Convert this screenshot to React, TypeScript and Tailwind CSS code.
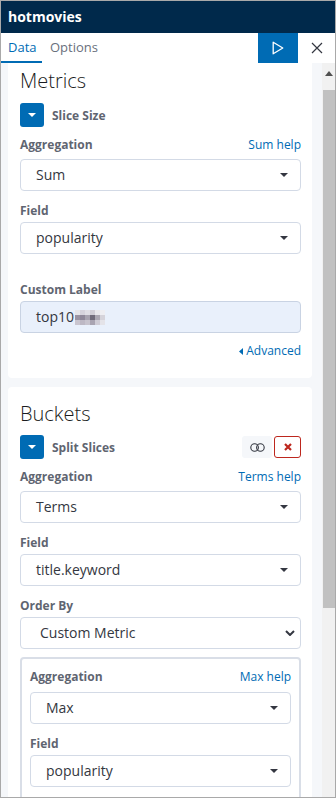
import React from "react";

const Caret = () => (
  <svg width="8" height="4" viewBox="0 0 8 4" className="shrink-0">
    <path d="M0 0 L8 0 L4 4 Z" fill="#343741" />
  </svg>
);

const Label = ({ children, className = "" }: { children: React.ReactNode; className?: string }) => (
  <div className={`text-[12px] leading-4 font-bold text-[#5f6571] ${className}`}>{children}</div>
);

const LabelRow = ({ label, link, className = "" }: { label: string; link?: string; className?: string }) => (
  <div className={`flex justify-between items-start ${className}`}>
    <Label>{label}</Label>
    {link && <div className="text-[12px] leading-4 text-[#006bb4]">{link}</div>}
  </div>
);

const Select = ({ value, className = "" }: { value: string; className?: string }) => (
  <div
    className={`h-8 border border-[#d3dae6] rounded-[4px] bg-white flex items-center justify-between pl-[15px] pr-[12px] ${className}`}
  >
    <span className="text-[14px] leading-5 text-[#343741]">{value}</span>
    <Caret />
  </div>
);

const NativeSelect = ({ value, className = "" }: { value: string; className?: string }) => (
  <div
    className={`h-8 border border-[#d3dae6] rounded-[4px] bg-white flex items-center justify-between pl-[19px] pr-[5px] ${className}`}
  >
    <span className="text-[14px] leading-5 text-[#343741]">{value}</span>
    <svg width="10" height="6" viewBox="0 0 10 6">
      <path d="M1 1 L5 5 L9 1" fill="none" stroke="#343741" strokeWidth="2" />
    </svg>
  </div>
);

const BlueToggle = () => (
  <div className="w-6 h-6 rounded-[3px] bg-[#006bb4] flex items-center justify-center shrink-0">
    <svg width="8" height="4" viewBox="0 0 8 4">
      <path d="M0 0 L8 0 L4 4 Z" fill="#ffffff" />
    </svg>
  </div>
);

const blur = [
  ["#e6e5ea", "#d6d3dc", "#e0dee5", "#d0cdd6", "#e8e7ec", "#eeeef2"],
  ["#9a93a3", "#8f8899", "#a8a3b0", "#6f6a7a", "#aaa6b2", "#d5d3da"],
  ["#c9c5cf", "#bdb8c4", "#c7c3cd", "#a9a4b1", "#cfccd5", "#e4e3e8"],
];

export default function App() {
  return (
    <div className="w-[336px] h-[798px] border border-[#a9a9a9] flex flex-col overflow-hidden bg-white font-['Open_Sans',sans-serif]">
      {/* Header */}
      <div className="h-8 shrink-0 bg-[#00294b] flex items-center px-[7px]">
        <span className="text-white font-bold text-[14px] leading-5">hotmovies</span>
      </div>

      {/* Tabs */}
      <div className="h-[30px] shrink-0 bg-white flex items-stretch">
        <div className="w-[41px] border-b-2 border-[#006bb4] flex items-center pl-[7px] text-[13px] leading-4 text-[#006bb4]">
          Data
        </div>
        <div className="ml-[8px] flex items-center pb-[2px] text-[13px] leading-4 text-[#69707d]">Options</div>
        <div className="flex-1" />
        <div className="w-10 bg-[#006bb4] flex items-center justify-center">
          <svg width="12" height="14" viewBox="0 0 12 14">
            <path d="M1.2 1.2 L10.8 7 L1.2 12.8 Z" fill="none" stroke="#ffffff" strokeWidth="1.3" strokeLinejoin="round" />
          </svg>
        </div>
        <div className="w-[37px] flex items-center justify-center">
          <svg width="12" height="12" viewBox="0 0 12 12">
            <path d="M1 1 L11 11 M11 1 L1 11" stroke="#343741" strokeWidth="1.2" />
          </svg>
        </div>
      </div>

      {/* Content */}
      <div className="flex-1 min-h-0 flex bg-[#f5f7fa]">
        <div className="w-[321px] pl-[7px] pr-[10px] flex flex-col overflow-hidden">
          {/* Metrics card */}
          <div className="bg-white rounded-b-[4px] pl-3 pr-[11px] pt-[6px] pb-[19px] shrink-0">
            <div className="text-[20px] leading-6 font-light text-[#1a1c21]">Metrics</div>
            <div className="mt-[10px] flex items-center gap-2">
              <BlueToggle />
              <Label className="pt-[1px]">Slice Size</Label>
            </div>
            <LabelRow className="mt-[10px]" label="Aggregation" link="Sum help" />
            <Select className="mt-[6px]" value="Sum" />
            <Label className="mt-3">Field</Label>
            <Select className="mt-[3px]" value="popularity" />
            <Label className="mt-[28px]">Custom Label</Label>
            <div className="mt-[3px] h-8 border border-[#c9d3e3] rounded-[4px] bg-[#e9f0fb] flex items-center pl-[15px]">
              <span className="text-[14px] leading-5 text-[#343741]">top10</span>
              <div className="flex flex-col ml-[1px]">
                {blur.map((row, i) => (
                  <div key={i} className="flex">
                    {row.map((c, j) => (
                      <div key={j} className="w-[5px] h-[5px]" style={{ backgroundColor: c }} />
                    ))}
                  </div>
                ))}
              </div>
            </div>
            <div className="mt-[10px] flex justify-end items-center gap-[3px] text-[12px] leading-4 text-[#006bb4]">
              <svg width="4" height="7" viewBox="0 0 4 7">
                <path d="M4 0 L4 7 L0 3.5 Z" fill="#006bb4" />
              </svg>
              <span>Advanced</span>
            </div>
          </div>

          {/* Buckets card */}
          <div className="mt-[9px] bg-white rounded-[4px] pl-3 pr-[11px] pt-[15px] pb-4 shrink-0">
            <div className="text-[20px] leading-6 font-light text-[#1a1c21]">Buckets</div>
            <div className="mt-[9px] flex items-center gap-2">
              <BlueToggle />
              <Label className="flex-1 pt-[1px]">Split Slices</Label>
              <div className="flex items-center gap-[2px]">
                <div className="w-[30px] h-[22px] rounded-[3px] bg-[#f5f7fa] flex items-center justify-center">
                  <svg width="15" height="9" viewBox="0 0 15 9">
                    <circle cx="4.6" cy="4.5" r="3.8" fill="none" stroke="#343741" strokeWidth="1.1" />
                    <circle cx="10.4" cy="4.5" r="3.8" fill="none" stroke="#343741" strokeWidth="1.1" />
                  </svg>
                </div>
                <div className="w-[27px] h-[22px] rounded-[3px] border border-[#bd271e] bg-white flex items-center justify-center">
                  <svg width="8" height="8" viewBox="0 0 8 8">
                    <path d="M1 1 L7 7 M7 1 L1 7" stroke="#bd271e" strokeWidth="2.2" />
                  </svg>
                </div>
              </div>
            </div>
            <LabelRow className="mt-[10px]" label="Aggregation" link="Terms help" />
            <Select className="mt-[6px]" value="Terms" />
            <Label className="mt-3">Field</Label>
            <Select className="mt-[3px]" value="title.keyword" />
            <Label className="mt-3">Order By</Label>
            <NativeSelect className="mt-[3px]" value="Custom Metric" />
            <div className="mt-2 border-2 border-[#d9dee7] rounded-[4px] px-2 pt-[10px] pb-3">
              <LabelRow label="Aggregation" link="Max help" />
              <Select className="mt-[7px]" value="Max" />
              <Label className="mt-3">Field</Label>
              <Select className="mt-[3px]" value="popularity" />
            </div>
          </div>
        </div>

        {/* Scrollbar */}
        <div className="w-[13px] flex flex-col bg-[#f1f1f1]">
          <div className="h-[27px] flex items-start justify-center pt-[8px]">
            <svg width="8" height="5" viewBox="0 0 8 5">
              <path d="M0 5 L8 5 L4 0 Z" fill="#505050" />
            </svg>
          </div>
          <div className="h-[518px] ml-[1px] bg-[#c1c1c1]" />
        </div>
      </div>
    </div>
  );
}
